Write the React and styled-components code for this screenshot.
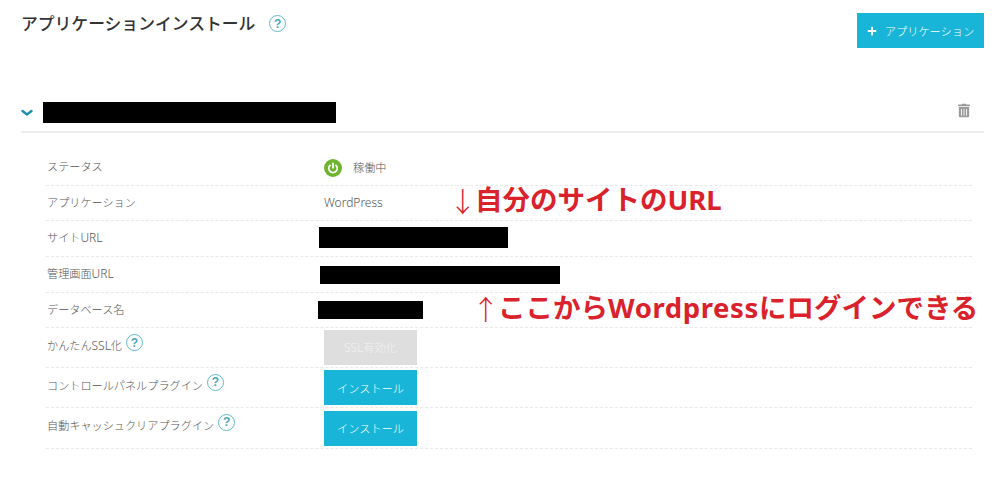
import React from "react";
import styled, { createGlobalStyle } from "styled-components";
import { FaPlus, FaTrashAlt } from "react-icons/fa";

const GlobalStyle = createGlobalStyle`
  html, body {
    margin: 0;
    background: #fff;
    font-family: "Noto Sans CJK JP", sans-serif;
    color: #555;
  }
`;

const Page = styled.div`
  position: relative;
  width: 1000px;
  height: 497px;
  overflow: hidden;
  padding: 13px 16px 0 21px;
  box-sizing: border-box;
`;

const TopBar = styled.header`
  display: flex;
  justify-content: space-between;
  align-items: flex-start;
  height: 88px;
`;

const TitleWrap = styled.div`
  display: flex;
  align-items: center;
  gap: 14px;
  height: 21px;
`;

const Title = styled.h1`
  margin: 0;
  font-size: 16.8px;
  font-weight: 500;
  line-height: 21px;
  color: #333;
`;

const Help = styled.span`
  display: inline-flex;
  align-items: center;
  justify-content: center;
  flex: none;
  width: 17px;
  height: 17px;
  box-sizing: border-box;
  border: 1.5px solid #62b9cb;
  border-radius: 50%;
  color: #4ba7ba;
  font-family: "Liberation Sans", sans-serif;
  font-size: 12px;
  font-weight: 700;
  line-height: 1;
`;

const LabelHelp = styled(Help)`
  margin-top: -6px;
`;

const Button = styled.button`
  display: inline-flex;
  align-items: center;
  justify-content: center;
  gap: ${(p) => p.$gap || 0}px;
  width: ${(p) => p.$w}px;
  height: 35px;
  padding: 0;
  border: 0;
  background: ${(p) => (p.disabled ? "#dedede" : "#18b5d8")};
  color: ${(p) => (p.disabled ? "#f1f1f1" : "#fff")};
  font-family: inherit;
  font-size: 11.2px;
  font-weight: 300;
`;

const AppHead = styled.div`
  display: flex;
  align-items: center;
  height: 30px;
  border-bottom: 2px solid #ececec;
  padding-right: 14px;
`;

const Chevron = styled.svg`
  width: 12px;
  height: 8px;
  margin: 0 10px 6px 0;
`;

const Redact = styled.div`
  width: ${(p) => p.$w}px;
  height: ${(p) => p.$h}px;
  margin-left: ${(p) => p.$shift || 0}px;
  margin-bottom: ${(p) => p.$raise || 0}px;
  background: #000;
`;

const Trash = styled(FaTrashAlt)`
  margin: 0 0 12px auto;
  width: 12px;
  height: 15px;
  color: #9a9a9a;
`;

const Table = styled.div`
  margin: 17px 12px 0 25px;
`;

const Row = styled.div`
  display: grid;
  grid-template-columns: 278px 1fr;
  align-items: center;
  height: ${(p) => p.$h}px;
  box-sizing: border-box;
  border-bottom: 1px dashed #e8e8e8;
`;

const Label = styled.div`
  display: flex;
  align-items: center;
  gap: 4px;
  padding: 0 0 3px 1px;
  font-size: 11.15px;
  font-weight: 300;
  line-height: 16px;
  color: #555;
`;

const ActionLabel = styled(Label)`
  align-self: start;
  padding: 9px 0 0 1px;
`;

const Value = styled.div`
  display: flex;
  align-items: center;
  gap: 11px;
  font-size: 11.15px;
  font-weight: 300;
  line-height: 16px;
  color: #555;
`;

const ValueText = styled.span`
  padding-bottom: 2px;
`;

// latin words run a bit bigger than the kana around them
const Latin = styled.span`
  font-family: "Noto Sans", sans-serif;
  font-size: 12px;
  font-weight: 300;
`;

const Note = styled.div`
  position: absolute;
  left: ${(p) => p.$x}px;
  top: ${(p) => p.$y}px;
  display: flex;
  color: #d9222c;
  font-family: "Noto Sans", "Noto Sans CJK JP", sans-serif;
  font-size: 27.5px;
  font-weight: 700;
  line-height: 34px;
  white-space: nowrap;
`;

const Arrow = styled.span`
  width: 25px;
  margin-left: -1px;
  margin-right: 1px;
  font-family: "Noto Sans CJK JP", sans-serif;
  font-weight: 300;
`;

const WideWord = styled.span`
  letter-spacing: 0.6px;
`;

const PowerIcon = () => (
  <svg width="18" height="18" viewBox="0 0 18 18">
    <circle cx="9" cy="9" r="9" fill="#6eb52d" />
    <path d="M6 6.4a4.2 4.2 0 1 0 6 0" fill="none" stroke="#fff" strokeWidth="1.8" strokeLinecap="round" />
    <path d="M9 4.5v4.2" stroke="#fff" strokeWidth="1.8" strokeLinecap="round" />
  </svg>
);

export default function App() {
  return (
    <Page>
      <GlobalStyle />
      <TopBar>
        <TitleWrap>
          <Title>アプリケーションインストール</Title>
          <Help>?</Help>
        </TitleWrap>
        <Button $w={127} $gap={8}>
          <FaPlus size={10} />
          アプリケーション
        </Button>
      </TopBar>

      <AppHead>
        <Chevron viewBox="0 0 12 8">
          <path d="M1.5 2 6 5.5 10.5 2" fill="none" stroke="#1d90ab" strokeWidth="2.4" strokeLinecap="round" />
        </Chevron>
        <Redact $w={293} $h={21} $raise={7} />
        <Trash />
      </AppHead>

      <Table>
        <Row $h={36}>
          <Label>ステータス</Label>
          <Value>
            <PowerIcon />
            <ValueText>稼働中</ValueText>
          </Value>
        </Row>
        <Row $h={35}>
          <Label>アプリケーション</Label>
          <Value>
            <ValueText>
              <Latin>WordPress</Latin>
            </ValueText>
          </Value>
        </Row>
        <Row $h={36}>
          <Label>
            <span>
              サイト<Latin>URL</Latin>
            </span>
          </Label>
          <Value>
            <Redact $w={189} $h={21} $shift={-5} $raise={3} />
          </Value>
        </Row>
        <Row $h={36}>
          <Label>
            <span>
              管理画面<Latin>URL</Latin>
            </span>
          </Label>
          <Value>
            <Redact $w={240} $h={18} $shift={-4} />
          </Value>
        </Row>
        <Row $h={35}>
          <Label>データベース名</Label>
          <Value>
            <Redact $w={105} $h={18} $shift={-6} />
          </Value>
        </Row>
        <Row $h={40}>
          <ActionLabel>
            <span>
              かんたん<Latin>SSL</Latin>化
            </span>
            <LabelHelp>?</LabelHelp>
          </ActionLabel>
          <Value>
            <Button $w={93} disabled>
              <span>
                <Latin>SSL</Latin>有効化
              </span>
            </Button>
          </Value>
        </Row>
        <Row $h={40}>
          <ActionLabel>
            コントロールパネルプラグイン
            <LabelHelp>?</LabelHelp>
          </ActionLabel>
          <Value>
            <Button $w={93}>インストール</Button>
          </Value>
        </Row>
        <Row $h={41}>
          <ActionLabel>
            自動キャッシュクリアプラグイン
            <LabelHelp>?</LabelHelp>
          </ActionLabel>
          <Value>
            <Button $w={93}>インストール</Button>
          </Value>
        </Row>
      </Table>

      <Note $x={450} $y={183}>
        <Arrow>↓</Arrow>
        <span>自分のサイトのURL</span>
      </Note>
      <Note $x={473} $y={291}>
        <Arrow>↑</Arrow>
        <span>
          ここから<WideWord>Wordpress</WideWord>にログインできる
        </span>
      </Note>
    </Page>
  );
}
